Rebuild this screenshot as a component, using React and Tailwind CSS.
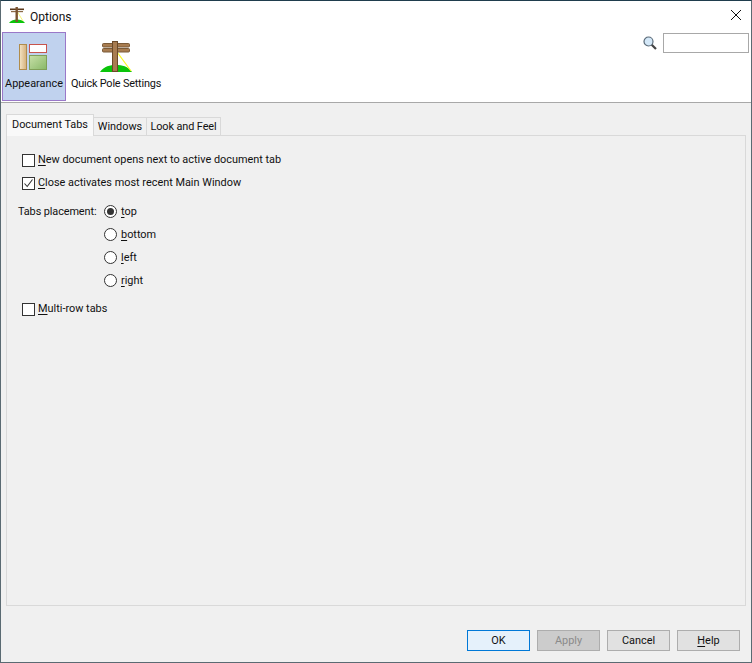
const U = ({ children }) => <span className="underline underline-offset-[1.5px] decoration-1">{children}</span>;

const Pole = () => (
  <svg width="32" height="32" viewBox="0 0 32 32">
    <path d="M0 31 C4 25 10 24 16 24 C22 24 28 25 32 31 Z" fill="#0ac40a" />
    <path d="M17 11 L31 30" stroke="#f8f820" strokeWidth="1.2" />
    <rect x="2.5" y="2.5" width="27" height="3.5" rx="1" fill="#a87c50" stroke="#7a5a38" />
    <rect x="2.5" y="7.5" width="27" height="3.5" rx="1" fill="#a87c50" stroke="#7a5a38" />
    <rect x="12.5" y="0.5" width="5" height="30" fill="#a87c50" stroke="#6b4a2a" />
  </svg>
);

const SmallPole = () => (
  <svg width="16" height="16" viewBox="0 0 16 16">
    <path d="M0 16 C2 13 5 12.5 8 12.5 C11 12.5 14 13 16 16 Z" fill="#0ac40a" />
    <path d="M8.5 5 L14 14" stroke="#f0f040" strokeWidth="0.7" />
    <rect x="1" y="1.5" width="14" height="1.6" fill="#5c3a1c" />
    <rect x="2" y="4" width="12" height="1.2" fill="#8a6a48" />
    <rect x="6.5" y="0" width="2.4" height="15" fill="#7a5430" />
  </svg>
);

const Appearance = () => (
  <svg width="30" height="28" viewBox="0 0 30 28">
    <defs>
      <linearGradient id="a" x1="0" x2="1" y1="0" y2="0">
        <stop offset="0" stopColor="#f4e4c4" />
        <stop offset="1" stopColor="#d4b07c" />
      </linearGradient>
      <linearGradient id="b" x1="0" x2="1" y1="0" y2="1">
        <stop offset="0" stopColor="#c8e0a8" />
        <stop offset="1" stopColor="#88b868" />
      </linearGradient>
    </defs>
    <rect x="0.5" y="0.5" width="7" height="25" fill="url(#a)" stroke="#b08c4c" />
    <rect x="10.5" y="0.5" width="17" height="8" fill="#fff" stroke="#c8544c" />
    <rect x="10.5" y="11.5" width="17" height="14" fill="url(#b)" stroke="#80a058" />
  </svg>
);

const Check = ({ checked, children, className = "" }) => (
  <div className={`flex items-center h-[14px] ${className}`}>
    <div className="w-[13px] h-[13px] border border-[#333] bg-white flex items-center justify-center shrink-0">
      {checked && (
        <svg width="11" height="11" viewBox="0 0 11 11">
          <path d="M1.5 5.5 L4.2 8.5 L9.5 1.5" stroke="#333" strokeWidth="1.1" fill="none" />
        </svg>
      )}
    </div>
    <span className="ml-[3px] whitespace-nowrap">{children}</span>
  </div>
);

const Radio = ({ checked, children }) => (
  <div className="flex items-center h-[13px]">
    <div className="w-[13px] h-[13px] rounded-full border border-[#333] bg-white flex items-center justify-center shrink-0">
      {checked && <div className="w-[7px] h-[7px] rounded-full bg-[#333]" />}
    </div>
    <span className="ml-[4px]">{children}</span>
  </div>
);

const Btn = ({ children, cls }) => (
  <div className={`w-[63px] h-[21px] flex items-center justify-center border pt-px ${cls}`}>{children}</div>
);

export default function App() {
  return (
    <div
      className="w-[752px] h-[663px] flex flex-col bg-[#f0f0f0] border border-[#5a6a72] border-t-[#1f3d4d] text-[10.9px] text-[#111] overflow-hidden"
      style={{ fontFamily: 'Roboto, "Liberation Sans", sans-serif' }}
    >
      <div className="h-[30px] bg-white flex items-center shrink-0">
        <div className="ml-[8px] mb-[2px]"><SmallPole /></div>
        <span className="ml-[5px] text-[12px] pt-px">Options</span>
        <svg className="ml-auto mr-[9px] mb-[2px]" width="12" height="12" viewBox="0 0 12 12">
          <path d="M1 1 L11 11 M11 1 L1 11" stroke="#111" strokeWidth="1" />
        </svg>
      </div>
      <div className="h-[72px] bg-white border-b border-[#a8a8a8] flex shrink-0">
        <div className="w-[64px] h-[69px] ml-px mt-px bg-[#c0d2ee] border border-[#9a78c8] flex flex-col items-center pt-[11px]">
          <Appearance />
          <span className="mt-[4px] leading-[16px] whitespace-nowrap">Appearance</span>
        </div>
        <div className="ml-[4px] w-[92px] flex flex-col items-center pt-[10px]">
          <Pole />
          <span className="mt-[3px] leading-[16px] whitespace-nowrap tracking-[-0.2px]">Quick Pole Settings</span>
        </div>
        <div className="ml-auto flex items-start pt-[2px] pr-[2px]">
          <svg className="mt-[3px] mr-[6px]" width="14" height="14" viewBox="0 0 14 14">
            <path d="M8.5 8.5 L13 13" stroke="#444" strokeWidth="2.2" />
            <circle cx="5.5" cy="5.5" r="4.5" fill="#d4e8f8" stroke="#5a6a78" strokeWidth="1.2" />
          </svg>
          <div className="w-[86px] h-[20px] bg-white border border-[#a8a8a8]" />
        </div>
      </div>
      <div className="flex-1 flex flex-col px-[5px] pt-[11px]">
        <div className="flex items-end h-[22px] relative z-10 whitespace-nowrap">
          <div className="w-[88px] h-[22px] bg-[#f9f9f9] border border-b-0 border-[#d9d9d9] flex items-center justify-center">Document Tabs</div>
          <div className="w-[53px] h-[19px] bg-[#f0f0f0] border border-l-0 border-[#d9d9d9] flex items-center justify-center pt-px">Windows</div>
          <div className="w-[74px] h-[19px] bg-[#f0f0f0] border border-l-0 border-[#d9d9d9] flex items-center justify-center pt-px tracking-[-0.1px]">Look and Feel</div>
        </div>
        <div className="h-[471px] -mt-px border border-[#d9d9d9] flex flex-col pl-[11px] pt-[17px] leading-[16px]">
          <Check className="ml-[4px]"><U>N</U>ew document opens next to active document tab</Check>
          <Check checked className="ml-[4px] mt-[9px]"><U>C</U>lose activates most recent Main Window</Check>
          <div className="flex mt-[15px]">
            <div className="w-[86px] h-[13px] flex items-center whitespace-nowrap tracking-[-0.1px]">Tabs placement:</div>
            <div className="flex flex-col gap-[10px]">
              <Radio checked><U>t</U>op</Radio>
              <Radio><U>b</U>ottom</Radio>
              <Radio><U>l</U>eft</Radio>
              <Radio><U>r</U>ight</Radio>
            </div>
          </div>
          <Check className="ml-[4px] mt-[15px]"><U>M</U>ulti-row tabs</Check>
        </div>
        <div className="flex justify-end gap-[7px] mt-[24px] pr-[6px]">
          <Btn cls="border-[#0078d7] bg-[#e5f1fb]">OK</Btn>
          <Btn cls="border-[#adadad] bg-[#cccccc] text-[#8a8a8a]">Apply</Btn>
          <Btn cls="border-[#adadad] bg-[#e1e1e1]">Cancel</Btn>
          <Btn cls="border-[#adadad] bg-[#e1e1e1]"><span><U>H</U>elp</span></Btn>
        </div>
      </div>
    </div>
  );
}
